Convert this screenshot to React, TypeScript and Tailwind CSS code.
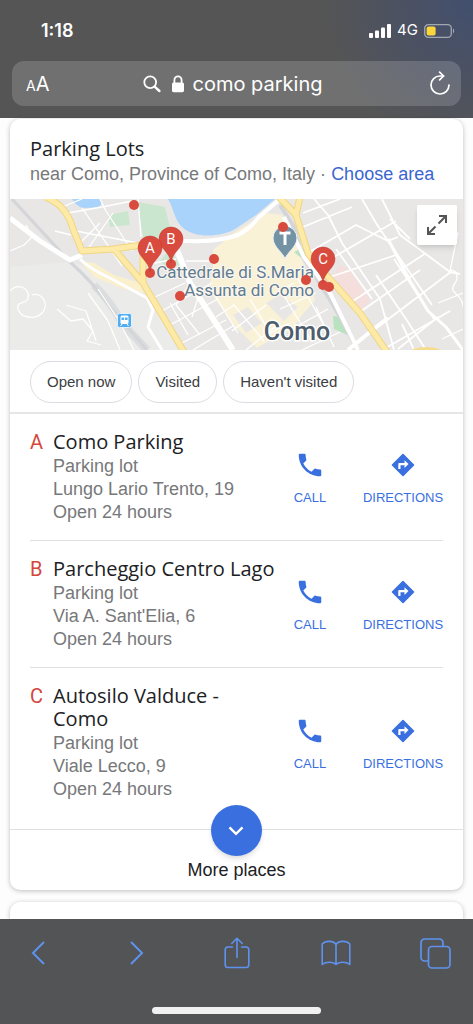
import { useState } from "react"

type Place = {
  letter: string
  name: string
  address: string
  hours: string
}

const places: Place[] = [
  { letter: "A", name: "Como Parking", address: "Lungo Lario Trento, 19", hours: "Open 24 hours" },
  { letter: "B", name: "Parcheggio Centro Lago", address: "Via A. Sant'Elia, 6", hours: "Open 24 hours" },
  { letter: "C", name: "Autosilo Valduce - Como", address: "Viale Lecco, 9", hours: "Open 24 hours" },
]

const filters = ["Open now", "Visited", "Haven't visited"]

// [x, y] of the unnamed results on the map
const dots = [
  [124, 6], [140, 74], [161, 65], [204, 60], [170, 97],
  [273, 28], [296, 81], [313, 86], [319, 88],
]

const pins = [
  { letter: "B", x: 161, y: 40 },
  { letter: "A", x: 140, y: 49 },
  { letter: "C", x: 313, y: 60 },
]

function StatusBar() {
  return (
    <div className="flex h-[61px] items-center justify-between pl-[41px] pr-[18px] font-['Inter',sans-serif] text-white">
      <span className="text-lg font-semibold">1:18</span>
      <div className="flex items-center gap-[6px]">
        <svg width="22" height="14" viewBox="0 0 22 14" fill="currentColor" aria-hidden="true">
          <rect x="0" y="9" width="4" height="5" rx="1" />
          <rect x="6" y="6.5" width="4" height="7.5" rx="1" />
          <rect x="12" y="3.5" width="4" height="10.5" rx="1" />
          <rect x="18" y="0" width="4" height="14" rx="1" />
        </svg>
        <span className="text-[15px]">4G</span>
        <svg width="31" height="14" viewBox="0 0 31 14" aria-hidden="true">
          <rect x="0.7" y="0.7" width="26.6" height="12.6" rx="3.6" fill="none" stroke="#a3a7b0" strokeWidth="1.3" />
          <rect x="2.6" y="2.6" width="9" height="8.8" rx="2" fill="#fbd53c" />
          <path d="M29 4.6c1.6.8 1.6 4 0 4.8z" fill="#a3a7b0" />
        </svg>
      </div>
    </div>
  )
}

function AddressBar() {
  return (
    <div className="mx-3 flex h-[45px] items-center justify-between rounded-xl bg-white/16 pl-[14px] pr-[10px] font-['Inter',sans-serif] text-white">
      <button aria-label="Text size" className="flex w-[60px] items-baseline">
        <span className="text-sm">A</span>
        <span className="text-xl">A</span>
      </button>
      <div className="flex items-center">
        <svg width="18" height="18" viewBox="0 0 18 18" fill="none" stroke="currentColor" aria-hidden="true">
          <circle cx="7.2" cy="7.2" r="5.9" strokeWidth="1.8" />
          <path d="M11.6 11.6l4.8 4.4" strokeWidth="2.4" strokeLinecap="round" />
        </svg>
        <svg className="ml-[10px] mr-2" width="14" height="18" viewBox="0 0 14 18" aria-hidden="true">
          <path d="M3.4 9V5.2a3.6 3.9 0 0 1 7.2 0V9" fill="none" stroke="currentColor" strokeWidth="1.8" />
          <rect x="1" y="7.6" width="12" height="9.6" rx="1.6" fill="currentColor" />
        </svg>
        <input
          aria-label="Address"
          defaultValue="como parking"
          className="w-[142px] bg-transparent text-xl outline-0"
        />
      </div>
      <button aria-label="Reload" className="flex w-[60px] justify-end">
        <svg width="22" height="25" viewBox="0 0 22 25" fill="none" stroke="currentColor" strokeWidth="1.7" strokeLinecap="round" strokeLinejoin="round">
          <path d="M20 14a9 9 0 1 1-9-9h3.500" />
          <path d="M10.600 1.200l4 3.800-4 3.900" />
        </svg>
      </button>
    </div>
  )
}

function ParkingMap() {
  return (
    <div className="relative">
      <svg
        className="block h-[151px] w-full font-['Roboto',sans-serif]"
        viewBox="0 0 453 151"
        preserveAspectRatio="xMidYMid slice"
        role="img"
        aria-label="Map of Como"
      >
        <rect width="453" height="151" fill="#e8e7e6" />

        {/* blocks */}
        <path d="M0 68L60 63 130 84 150 110 172 151H0z" fill="#ebebe9" />
        <path d="M203 51l21-17 32-20 16 2 12 26 9 22 12 37-12 14-12 16-24 12-10 6-24-24-24-34 4-22z" fill="#faf2d6" />
        <path d="M256 104l14-8 18 12-14 14zM223 116l15-8 14 16-16 10z" fill="#e8e7e6" />
        <path d="M70 62l14 2 20 12 26 8 4 10-20-4-30-12z" fill="#faf0cd" />
        <path d="M323 76l7-10 10 5 20 30-9 12z" fill="#f5dfdc" />

        {/* parks and lake */}
        <path d="M128 3l27 5 6 24-14 12-14-6-3-20z" fill="#cbe6ce" />
        <path d="M98 16l20-4 2 14-20 2zM150 62l10-12 10 16-12 4z" fill="#cbe6ce" />
        <path d="M284 53l10-5 4 8-8 2zM323 117l8 1 9 19-16-7z" fill="#b9e2bf" />
        <path d="M158 0c6 10 6 20 14 28 12 12 40 10 53 2L246 16 265 0z" fill="#a9d3fb" />
        <path d="M62 0c4 6 8 9 13 9 6-1 12 1 16-3V0z" fill="#a9d3fb" />

        {/* railway */}
        <g fill="none" stroke="#d3d5d8">
          <path d="M2 0L60 63Q84 84 100 108L137 151" strokeWidth="3" />
          <path d="M84 86Q102 104 112 124L137 151" strokeWidth="8" opacity=".65" />
          <path d="M270 6l14 22 8 28 30 48 26 47" strokeWidth="4" />
        </g>

        {/* small streets */}
        <g fill="none" stroke="#fff" strokeWidth="1.3" strokeLinejoin="round">
          <path d="M58 14L92 8 122 2M52 8l20-8M72 9l40 58M90 0l6 12 26 40M66 32l62 12M77 51l26-37M128 0l3 38M61 36l-16-4M130 44l20 8M90 24l-22 22" />
          <path d="M0 52l14-6 8-8-6-12M0 92c8-8 20-4 18 8-4 6-12 2-10 10s16 12 24 4 0-22-10-18" />
          <path d="M47 110l14 12 12-2 10 12-6 10 14 4M56 106l20 6 10 30M78 94l20 28 12 29M88 90l20 30 16 31" />
          <path d="M145 98l30-14M152 112l50-28M160 126l48-26M170 145l46-24M183 151l40-24M134 66l32-6M180 84l-14 22 24 30M176 62h30M190 92l-8 26M206 118l18-12 30 36M222 132l34-26M236 151l30-24M240 100l20 34 20-10M160 104l18 32M206 98l22 36" />
          <path d="M262 96l22-12M270 110l36-16M282 130l36-20M292 151l38-18M270 90l30 50M286 76l32 58M306 108l18 40" />
          <path d="M293 14L330 0M293 28L342 8M298 54L346 26l32 16 44 64M304 0l14 16 14 28 38 56 14 51M352 0l14 24 12 18 10-4M372 0l18 36 50 37 10 2M310 66l76-44M320 78l66-22M340 104l76-50M350 113l60-42M360 134l82-62M374 150l66-38M384 60l40 60M366 76l30 44 20 31M326 50l36 50M388 150l40-32M404 151l-12-26M380 20l20 20" strokeWidth="1.8" />
          <path d="M424 44l24-10-8 38M438 72c8-4 12 6 6 14s10 10 9 22M428 104l25-10M432 140l21-10" />
        </g>

        {/* wide streets */}
        <g fill="none" stroke="#fff" strokeLinejoin="round">
          <path d="M0 19L30 42 60 61 72 56" strokeWidth="5" />
          <path d="M70 60Q80 70 100 79L137 99 143 111 138 128 152 151" strokeWidth="3" />
          <path d="M167 51L180 84 223 151" strokeWidth="6" />
          <path d="M150 40Q200 46 228 36 240 30 248 19L270 0" strokeWidth="4" />
          <path d="M274 18l20 40 26 36 28 57M338 151l22-18 18-14" strokeWidth="4" />
          <path d="M378 40L400 82 418 112 436 128 453 151" strokeWidth="3" />
        </g>

        {/* main roads */}
        <g fill="none" strokeLinejoin="round">
          <g stroke="#f1d583" strokeWidth="7">
            <path d="M36-2Q48 4 52 9 60 18 63 30L72 52 103 50 132 46M104 50L133 84 145 104 174 153M133 48V84" />
            <path d="M269-2L286 16 298 54Q306 66 320 80L350 114 377 153M290-2L286 16" />
          </g>
          <g stroke="#fdeaa6" strokeWidth="5">
            <path d="M36-2Q48 4 52 9 60 18 63 30L72 52 103 50 132 46M104 50L133 84 145 104 174 153M133 48V84" />
            <path d="M269-2L286 16 298 54Q306 66 320 80L350 114 377 153M290-2L286 16" />
          </g>
          <path d="M403 152q14-4 26 0" stroke="#f6dc8f" strokeWidth="4" />
        </g>

        {/* train station */}
        <g>
          <rect x="107.500" y="114.500" width="14" height="14" rx="2" fill="#52aef0" stroke="#e4f2fc" />
          <rect x="110.500" y="116.500" width="8" height="8.500" rx="1.500" fill="#fff" />
          <path d="M111.500 118.500h2.600v2.600h-2.600zM115 118.500h2.600v2.600H115z" fill="#52aef0" />
          <path d="M112 125l-1.500 2M117 125l1.500 2" stroke="#fff" />
        </g>

        {/* theatre */}
        <path d="M275 60c-1.500-6-12-12-12-21a12 12 0 0 1 24 0c0 9-10.500 15-12 21z" fill="#7393a5" stroke="#eef3f5" />
        <path d="M269.500 34h11M275 34v12" stroke="#fff" strokeWidth="3" fill="none" />

        <g fill="#647b8c" stroke="#f8f8f6" strokeWidth="2" paintOrder="stroke" textAnchor="end" fontSize="17">
          <text x="304" y="79">Cattedrale di S.Maria</text>
          <text x="304" y="97">Assunta di Como</text>
        </g>
        <text x="287" y="141" textAnchor="middle" fontSize="25" fontWeight="500" fill="#4e5d6c" stroke="#fff" strokeWidth="3" paintOrder="stroke">
          Como
        </text>

        {dots.map(([x, y]) => (
          <circle key={`${x}-${y}`} cx={x} cy={y} r="5" fill="#d84b3e" />
        ))}
        {pins.map((pin) => (
          <g key={pin.letter} transform={`translate(${pin.x} ${pin.y})`}>
            <path d="M0 24C-1 13-12 9-12 0a12 12 0 0 1 24 0C12 9 1 13 0 24z" fill="#d84b3e" stroke="#c03a30" strokeWidth=".5" />
            <text y="5" textAnchor="middle" fontSize="15" fill="#fff">{pin.letter}</text>
          </g>
        ))}
      </svg>
      <button aria-label="Expand map" className="absolute right-[6px] top-[6px] flex size-10 items-center justify-center rounded-xs bg-white shadow-md">
        <svg width="22" height="22" viewBox="0 0 22 22" fill="none" stroke="#555" strokeWidth="2">
          <path d="M13 2h7v7M20 2l-7.500 7.500M9 20H2v-7M2 20l7.500-7.500" />
        </svg>
      </button>
    </div>
  )
}

function PlaceRow({ place }: { place: Place }) {
  return (
    <div className="ml-5 flex items-center py-4 pr-[19px]">
      <span className="w-[23px] self-start font-['Roboto',sans-serif] text-xl leading-[25px] text-[#d3473b]">{place.letter}</span>
      <div className="flex-1 pr-[14px] text-lg leading-[23px] text-[#77787a]">
        <h3 className="mb-[2px] font-['Open_Sans',sans-serif] text-xl leading-[23px] text-[#202124]">{place.name}</h3>
        <p>Parking lot</p>
        <p>{place.address}</p>
        <p>{place.hours}</p>
      </div>
      <div className="flex gap-8 pt-1 text-[13px] leading-5 text-[#3a6fdf]">
        <button className="flex w-10 flex-col items-center gap-2">
          <svg width="30" height="30" viewBox="0 0 24 24" fill="currentColor" aria-hidden="true">
            <path d="M6.620 10.790c1.440 2.830 3.760 5.140 6.590 6.590l2.200-2.200c.27-.27.67-.36 1.020-.24 1.120.37 2.330.57 3.570.57.55 0 1 .45 1 1V20c0 .55-.45 1-1 1-9.390 0-17-7.610-17-17 0-.55.45-1 1-1h3.500c.55 0 1 .45 1 1 0 1.250.2 2.450.57 3.570.11.35.03.74-.25 1.020l-2.200 2.200z" />
          </svg>
          CALL
        </button>
        <a href="#directions" className="flex w-[82px] flex-col items-center gap-2">
          <svg width="24" height="24" viewBox="0 0 24 24" className="my-[3px]" aria-hidden="true">
            <path d="M12 1.500L22.500 12 12 22.500 1.500 12z" fill="currentColor" stroke="currentColor" strokeWidth="1.600" strokeLinejoin="round" />
            <path d="M13.500 15v-2.700h-4V16H7.300v-5c0-.7.400-1.100 1.100-1.100h5.100V7.200l4 3.900z" fill="#fff" />
          </svg>
          DIRECTIONS
        </a>
      </div>
    </div>
  )
}

function Toolbar() {
  return (
    <footer className="flex flex-col items-center bg-[#535455] pb-[10px]">
      <nav className="flex h-[68px] w-full items-center justify-between px-5 text-[#5f92ee]">
        <button aria-label="Back" className="flex w-9 justify-center">
          <svg width="16" height="26" viewBox="0 0 16 26" fill="none" stroke="currentColor" strokeWidth="2">
            <path d="M14 2L3 13l11 11" />
          </svg>
        </button>
        <button aria-label="Forward" className="flex w-9 justify-center">
          <svg width="16" height="26" viewBox="0 0 16 26" fill="none" stroke="currentColor" strokeWidth="2">
            <path d="M2 2l11 11L2 24" />
          </svg>
        </button>
        <button aria-label="Share" className="flex w-9 justify-center">
          <svg width="26" height="32" viewBox="0 0 26 32" fill="none" stroke="currentColor" strokeWidth="1.600" strokeLinecap="round" strokeLinejoin="round">
            <path d="M8.500 10H4a2.800 2.800 0 0 0-2.800 2.800v14.900A2.800 2.800 0 0 0 4 30.500h18a2.800 2.800 0 0 0 2.800-2.800V12.800A2.800 2.800 0 0 0 22 10h-4.500" />
            <path d="M13 20.500V1.500M7.800 6.500L13 1.300l5.200 5.200" />
          </svg>
        </button>
        <button aria-label="Bookmarks" className="flex w-9 justify-center">
          <svg width="30" height="26" viewBox="0 0 30 26" fill="none" stroke="currentColor" strokeWidth="1.600" strokeLinejoin="round">
            <path d="M15 4.500C12.500.6 4.500.2 1.200 4v20.500c3.300-3 11.300-3 13.800 0 2.500-3 10.500-3 13.800 0V4C25.500.2 17.500.6 15 4.500zM15 4.500v20" />
          </svg>
        </button>
        <button aria-label="Tabs" className="flex w-9 justify-center">
          <svg width="31" height="31" viewBox="0 0 31 31" fill="none" stroke="currentColor" strokeWidth="1.700">
            <rect x="8.500" y="8.500" width="21.500" height="21.500" rx="3.500" />
            <path d="M8.500 23H4.500A3.500 3.500 0 0 1 1 19.500V4.500A3.500 3.500 0 0 1 4.500 1h15A3.500 3.500 0 0 1 23 4.500v4" />
          </svg>
        </button>
      </nav>
      <div className="mt-5 h-[7px] w-[169px] rounded-full bg-[#f1f1f1]" />
    </footer>
  )
}

function App() {
  const [active, setActive] = useState<string | null>(null)

  return (
    <div className="flex min-h-screen flex-col bg-[#fdfdfd] font-['Liberation_Sans',sans-serif]">
      <header className="bg-[#555] bg-[radial-gradient(circle_at_100%_0,#414f6e_0,#4a5164_60px,#555_150px)] pb-3">
        <StatusBar />
        <AddressBar />
      </header>

      <main className="flex flex-1 flex-col gap-3 px-[10px] pt-px">
        <section className="rounded-[10px] bg-white shadow-[0_1px_5px_rgba(0,0,0,0.25)]">
          <div className="px-5 pb-3 pt-4">
            <h2 className="font-['Open_Sans',sans-serif] text-xl leading-[27px] text-[#202124]">Parking Lots</h2>
            <p className="text-lg leading-[25px] text-[#77787a]">
              near Como, Province of Como, Italy · <a href="#area" className="text-[#3a66cf]">Choose area</a>
            </p>
          </div>
          <ParkingMap />
          <div className="flex gap-[6px] border-b-2 border-[#e6e6e8] px-5 pb-[9px] pt-[11px]">
            {filters.map((filter) => (
              <button
                key={filter}
                onClick={() => setActive((prev) => (prev === filter ? null : filter))}
                className={`${active === filter ? "bg-blue-50" : ""} h-[42px] rounded-full border border-[#dcdde2] px-4 text-[15px] text-[#3c4043]`}
              >
                {filter}
              </button>
            ))}
          </div>

          <ul>
            {places.map((place, i) => (
              <li key={place.letter}>
                {i > 0 && <hr className="mx-5 border-[#dfe0e2]" />}
                <PlaceRow place={place} />
              </li>
            ))}
          </ul>

          <div className="mt-3 flex flex-col items-center border-t border-[#dfe0e2] pb-2">
            <button className="-mt-[25px] flex flex-col items-center gap-[3px] text-lg leading-[23px] text-[#202124]">
              <span className="flex size-[51px] items-center justify-center rounded-full bg-[#3a6fdf] text-white shadow-md">
                <svg width="16" height="10" viewBox="0 0 16 10" fill="none" stroke="currentColor" strokeWidth="2.400">
                  <path d="M1.500 1.300L8 7.800l6.500-6.500" />
                </svg>
              </span>
              More places
            </button>
          </div>
        </section>

        <section className="min-h-4 flex-1 rounded-t-[10px] bg-white shadow-[0_1px_5px_rgba(0,0,0,0.25)]" />
      </main>

      <Toolbar />
    </div>
  )
}

export default App
